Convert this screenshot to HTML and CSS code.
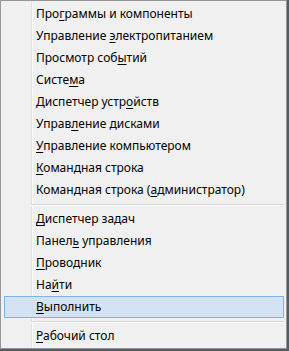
FILE: index.html
```html
<!DOCTYPE html>
<html lang="ru">
<head>
    <meta charset="UTF-8">
    <meta name="viewport" content="width=device-width, initial-scale=1.0">
    <title>Win+X</title>
    <link rel="stylesheet" href="styles.css">
</head>
<body>
<ul class="menu">
    <li class="item">Про<u>г</u>раммы и компоненты</li>
    <li class="item">Управление <u>э</u>лектропитанием</li>
    <li class="item">Просмотр соб<u>ы</u>тий</li>
    <li class="item">Систе<u>м</u>а</li>
    <li class="item">Диспетчер устр<u>о</u>йств</li>
    <li class="item">Управ<u>л</u>ение дисками</li>
    <li class="item"><u>У</u>правление компьютером</li>
    <li class="item"><u>К</u>омандная строка</li>
    <li class="item">Командная строка (<u>а</u>дминистратор)</li>
    <li class="separator"></li>
    <li class="item"><u>Д</u>испетчер задач</li>
    <li class="item">Панел<u>ь</u> управления</li>
    <li class="item"><u>П</u>роводник</li>
    <li class="item">На<u>й</u>ти</li>
    <li class="item active"><u>В</u>ыполнить</li>
    <li class="separator"></li>
    <li class="item"><u>Р</u>абочий стол</li>
</ul>
</body>
</html>
```

FILE: styles.css
```css
body {
    margin: 0;
    background-color: #555b62;
    font-family: "Noto Sans", "Open Sans", sans-serif;
    font-size: 12px;
    color: #000;
}

.menu {
    list-style: none;
    box-sizing: border-box;
    width: 287px;
    height: 349px;
    margin: 0;
    padding: 2px 0 1px 0;
    border: 1px solid #979797;
    background-color: #f0f0f0;
    background-image: linear-gradient(to right,
        transparent 30px, #e2e2e2 30px, #e2e2e2 31px,
        #fcfcfc 31px, #fcfcfc 32px, transparent 32px);
}

.item {
    height: 20px;
    line-height: 20px;
    margin: 0 2px 0 3px;
    padding-left: 31px;
    border: 1px solid transparent;
    white-space: nowrap;
}

.item u {
    text-decoration-thickness: 1px;
    text-underline-offset: 2px;
}

.item.active {
    background-color: #d3e3f4;
    border-color: #7fb2e8;
}

.separator {
    height: 1px;
    margin: 3px 2px 3px 30px;
    background-color: #d7d7d7;
    border-bottom: 1px solid #fcfcfc;
    height: 1px;
    box-sizing: content-box;
    margin-bottom: 2px;
}
```
